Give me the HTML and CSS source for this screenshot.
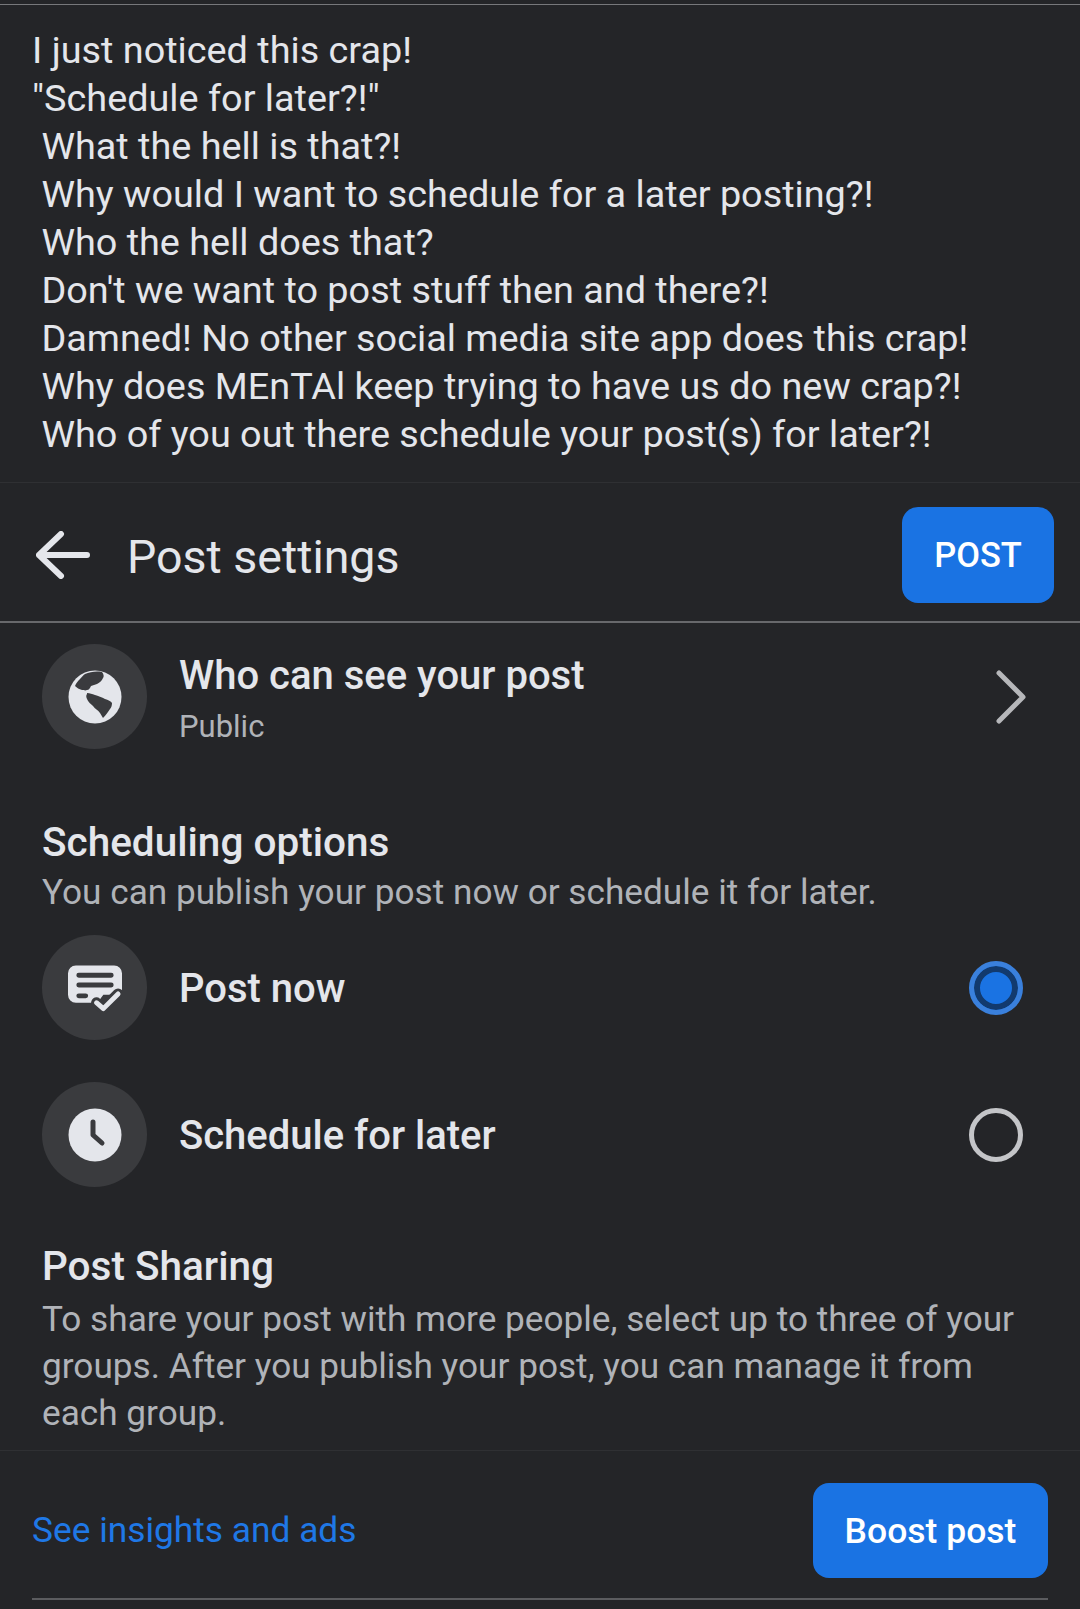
FILE: index.html
```html
<!DOCTYPE html>
<html lang="en">
<head>
    <meta charset="UTF-8">
    <meta name="viewport" content="width=device-width, initial-scale=1.0">
    <title>Post settings</title>
    <link rel="stylesheet" href="styles.css">
</head>
<body>
    <div class="top-line"></div>
    <div class="post-text">I just noticed this crap!
"Schedule for later?!"
 What the hell is that?!
 Why would I want to schedule for a later posting?!
 Who the hell does that?
 Don't we want to post stuff then and there?!
 Damned! No other social media site app does this crap!
 Why does MEnTAl keep trying to have us do new crap?!
 Who of you out there schedule your post(s) for later?!</div>

    <div class="header">
        <svg class="back-arrow" viewBox="0 0 54 48"><path d="M3 24H51M25 3 3 24l22 21"/></svg>
        <h1>Post settings</h1>
        <button class="btn btn-post">POST</button>
    </div>

    <div class="row row-audience">
        <div class="icon-circle">
            <svg class="icon" viewBox="0 0 54 54">
                <circle cx="27" cy="27" r="26.5" fill="#e4e6eb"/>
                <path class="cut" d="M34 2c2 2 2 5 1 6-1 3-4 5-6 6-2 1-4 1-6 2-1 2-2 4-4 4-2 1-3 0-5 0-3-1-5-2-7-4 1-3 3-5 5-7 2-2 3-4 5-5 5-2 11-3 17-2z"/>
                <path class="cut" d="M19 23c3 0 5 1 8 2 3 1 7 2 10 4 3 1 6 2 7 4 0 3-1 5-2 6-2 3-4 6-7 9-1-2-2-3-3-5-2-3-5-4-7-7-2-2-5-4-6-7-1-2-1-4 0-5z"/>
            </svg>
        </div>
        <div class="row-text">
            <div class="row-title">Who can see your post</div>
            <div class="row-sub">Public</div>
        </div>
        <svg class="chevron" viewBox="0 0 30 54"><path d="M3 3l24 24L3 51"/></svg>
    </div>

    <h2 class="section-title section-schedule">Scheduling options</h2>
    <p class="section-desc">You can publish your post now or schedule it for later.</p>

    <div class="row row-now">
        <div class="icon-circle">
            <svg class="icon" viewBox="0 0 55 46">
                <path fill="#e4e6eb" d="M8 0h39a8 8 0 0 1 8 8v22H36l-6 8H8a8 8 0 0 1-8-8V8a8 8 0 0 1 8-8z"/>
                <path class="bar" d="M11 10h33M11 20h33M11 31h7"/>
                <path class="check-gap" d="M29 38l7 6 15-15"/>
                <path class="check" d="M29 38l7 6 15-15"/>
            </svg>
        </div>
        <div class="row-title row-label">Post now</div>
        <span class="radio radio-on"></span>
    </div>

    <div class="row row-later">
        <div class="icon-circle">
            <svg class="icon" viewBox="0 0 54 54">
                <circle cx="27" cy="27" r="26.5" fill="#e4e6eb"/>
                <path class="bar" d="M25 14v13l9 8"/>
            </svg>
        </div>
        <div class="row-title row-label">Schedule for later</div>
        <span class="radio"></span>
    </div>

    <h2 class="section-title section-sharing">Post Sharing</h2>
    <p class="section-desc">To share your post with more people, select up to three of your groups. After you publish your post, you can manage it from each group.</p>

    <div class="footer">
        <a class="insights">See insights and ads</a>
        <button class="btn btn-boost">Boost post</button>
    </div>
    <div class="bottom-line"></div>
</body>
</html>
```

FILE: styles.css
```css
* {
    margin: 0;
    padding: 0;
    box-sizing: border-box;
}

body {
    width: 1080px;
    height: 1609px;
    overflow: hidden;
    background: #242528;
    color: #e4e6eb;
    font-family: Roboto, "Noto Sans", sans-serif;
}

.top-line {
    height: 1px;
    margin-top: 4px;
    background: #77787b;
}

.post-text {
    height: 478px;
    padding: 21px 32px 0;
    border-bottom: 1px solid #2f3033;
    font-size: 37.8px;
    line-height: 48px;
    white-space: pre;
}

.header {
    display: flex;
    align-items: center;
    height: 140px;
    padding: 0 26px 0 36px;
    border-bottom: 2px solid #68696c;
}

.back-arrow {
    width: 54px;
    height: 48px;
    margin-top: 6px;
}

.back-arrow path {
    fill: none;
    stroke: #e4e6eb;
    stroke-width: 6;
    stroke-linecap: round;
    stroke-linejoin: round;
}

h1 {
    flex: 1;
    margin: 10px 0 0 37px;
    font-size: 46.5px;
    font-weight: 400;
}

.btn {
    border: none;
    border-radius: 16px;
    background: #1a73e3;
    color: white;
    font-family: inherit;
    font-weight: 500;
}

.btn-post {
    width: 152px;
    height: 96px;
    margin-top: 6px;
    font-size: 34.5px;
}

.row {
    display: flex;
    align-items: center;
    height: 105px;
    padding: 0 57px 0 42px;
}

.row-audience {
    margin-top: 21px;
}

.row-now {
    margin-top: 19px;
}

.row-later {
    margin-top: 42px;
}

.icon-circle {
    display: flex;
    align-items: center;
    justify-content: center;
    flex: none;
    width: 105px;
    height: 105px;
    margin-right: 32px;
    border-radius: 50%;
    background: #3a3b3e;
}

.icon {
    width: 54px;
    height: 54px;
}

.cut {
    fill: #3a3b3e;
}

.bar {
    fill: none;
    stroke: #3a3b3e;
    stroke-width: 5;
    stroke-linecap: round;
    stroke-linejoin: round;
}

.check {
    fill: none;
    stroke: #e4e6eb;
    stroke-width: 5;
    stroke-linecap: round;
    stroke-linejoin: round;
}

.check-gap {
    fill: none;
    stroke: #3a3b3e;
    stroke-width: 11;
    stroke-linecap: round;
    stroke-linejoin: round;
}

.row-text {
    flex: 1;
    margin-top: 8px;
}

.row-title {
    flex: 1;
    font-size: 40px;
    font-weight: 500;
    line-height: 52px;
}

.row-label {
    margin-top: 2px;
}

.row-sub {
    font-size: 31px;
    line-height: 50px;
    color: #b0b3b8;
}

.chevron {
    width: 30px;
    height: 54px;
    margin-right: -3px;
}

.chevron path {
    fill: none;
    stroke: #b6b7ba;
    stroke-width: 5;
    stroke-linecap: round;
    stroke-linejoin: round;
}

.radio {
    width: 54px;
    height: 54px;
    border: 5px solid #c4c5c8;
    border-radius: 50%;
}

.radio-on {
    border-color: #3a80dc;
    background: #1a73e3;
    box-shadow: inset 0 0 0 6px #123a6e;
}

.section-title {
    padding: 0 42px;
    font-size: 40.5px;
    font-weight: 500;
    line-height: 49px;
}

.section-schedule {
    margin-top: 69px;
}

.section-sharing {
    margin: 55px 0 5px;
}

.section-desc {
    padding: 0 42px;
    font-size: 35.2px;
    line-height: 47px;
    color: #b0b3b8;
}

.section-schedule + .section-desc {
    margin-top: 2px;
}

.footer {
    display: flex;
    align-items: center;
    justify-content: space-between;
    height: 148px;
    margin-top: 13px;
    padding: 0 32px;
    border-top: 1px solid #2f3033;
}

.insights {
    margin-top: 10px;
    font-size: 35.3px;
    color: #1f78e6;
}

.btn-boost {
    width: 235px;
    height: 95px;
    margin-top: 12px;
    font-size: 35.5px;
}

.bottom-line {
    height: 2px;
    margin: 0 32px;
    background: #5b5c5f;
}
```
